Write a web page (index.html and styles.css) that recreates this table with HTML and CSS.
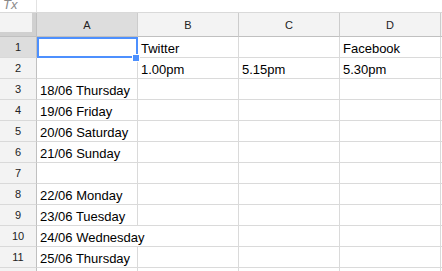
FILE: index.html
```html
<!DOCTYPE html>
<html>
<head>
<meta charset="utf-8">
<link rel="stylesheet" href="styles.css">
</head>
<body>
<div class="formula-bar">
  <span class="fx">Tx</span>
  <span class="fx-sep"></span>
</div>
<div class="sheet">
  <div class="corner"><div class="corner-inner"></div></div>
  <div class="col-head sel">A</div>
  <div class="col-head">B</div>
  <div class="col-head">C</div>
  <div class="col-head">D</div>
  <div class="col-head"></div>

  <div class="row-head sel">1</div>
  <div class="cell active"><span class="handle"></span></div>
  <div class="cell">Twitter</div>
  <div class="cell"></div>
  <div class="cell">Facebook</div>
  <div class="cell"></div>

  <div class="row-head">2</div>
  <div class="cell"></div>
  <div class="cell">1.00pm</div>
  <div class="cell">5.15pm</div>
  <div class="cell">5.30pm</div>
  <div class="cell"></div>

  <div class="row-head">3</div>
  <div class="cell">18/06 Thursday</div>
  <div class="cell"></div><div class="cell"></div><div class="cell"></div><div class="cell"></div>

  <div class="row-head">4</div>
  <div class="cell">19/06 Friday</div>
  <div class="cell"></div><div class="cell"></div><div class="cell"></div><div class="cell"></div>

  <div class="row-head">5</div>
  <div class="cell">20/06 Saturday</div>
  <div class="cell"></div><div class="cell"></div><div class="cell"></div><div class="cell"></div>

  <div class="row-head">6</div>
  <div class="cell">21/06 Sunday</div>
  <div class="cell"></div><div class="cell"></div><div class="cell"></div><div class="cell"></div>

  <div class="row-head">7</div>
  <div class="cell"></div>
  <div class="cell"></div><div class="cell"></div><div class="cell"></div><div class="cell"></div>

  <div class="row-head">8</div>
  <div class="cell">22/06 Monday</div>
  <div class="cell"></div><div class="cell"></div><div class="cell"></div><div class="cell"></div>

  <div class="row-head">9</div>
  <div class="cell">23/06 Tuesday</div>
  <div class="cell"></div><div class="cell"></div><div class="cell"></div><div class="cell"></div>

  <div class="row-head">10</div>
  <div class="cell span2">24/06 Wednesday</div>
  <div class="cell"></div><div class="cell"></div><div class="cell"></div>

  <div class="row-head">11</div>
  <div class="cell">25/06 Thursday</div>
  <div class="cell"></div><div class="cell"></div><div class="cell"></div><div class="cell"></div>

  <div class="row-head"></div>
  <div class="cell"></div>
  <div class="cell"></div><div class="cell"></div><div class="cell"></div><div class="cell"></div>
</div>
</body>
</html>
```

FILE: styles.css
```css
html, body {
  margin: 0;
  padding: 0;
  background: #fff;
  overflow: hidden;
  font-family: "Liberation Sans", Arial, sans-serif;
}

/* formula bar strip at the top */
.formula-bar {
  height: 12px;
  border-bottom: 1px solid #d9d9d9;
  display: flex;
  align-items: flex-start;
  overflow: hidden;
}
.fx {
  width: 36px;
  box-sizing: border-box;
  padding-left: 3px;
  font-size: 13px;
  line-height: 12px;
  font-style: italic;
  color: #8a8a8a;
  margin-top: -1px;
}
.fx-sep {
  width: 1px;
  height: 12px;
  background: #e2e2e2;
}

/* grid of headers and cells */
.sheet {
  display: grid;
  grid-template-columns: 37px repeat(5, 101px);
  grid-template-rows: 24px repeat(12, 21px);
}

.corner {
  background: #d0d0d0;
  border-right: 1px solid #c0c0c0;
  border-bottom: 1px solid #c0c0c0;
}
.corner-inner {
  width: 32px;
  height: 19px;
  background: #f3f3f3;
}

.col-head,
.row-head {
  background: #f3f3f3;
  color: #222;
  font-size: 11px;
  display: flex;
  align-items: center;
  justify-content: center;
  border-right: 1px solid #cccccc;
  border-bottom: 1px solid #cccccc;
}
.col-head {
  border-bottom-color: #c0c0c0;
}
.row-head {
  border-right-color: #c0c0c0;
  border-bottom-color: #d9d9d9;
}
.col-head.sel,
.row-head.sel {
  background: #dddddd;
}

.cell {
  position: relative;
  border-right: 1px solid #dadada;
  border-bottom: 1px solid #dadada;
  font-size: 13px;
  line-height: 15px;
  color: #000;
  padding: 0 3px 1px;
  display: flex;
  align-items: flex-end;
  white-space: nowrap;
  overflow: visible;
}
.span2 {
  grid-column: span 2;
}

/* active cell selection frame and fill handle */
.active::after {
  content: "";
  position: absolute;
  top: 0;
  left: 0;
  right: -1px;
  bottom: -1px;
  border: 2px solid #4d90fe;
  pointer-events: none;
}
.handle {
  position: absolute;
  right: -3px;
  bottom: -5px;
  width: 6px;
  height: 6px;
  background: #4d90fe;
  border: 1px solid #fff;
  z-index: 2;
}
```
